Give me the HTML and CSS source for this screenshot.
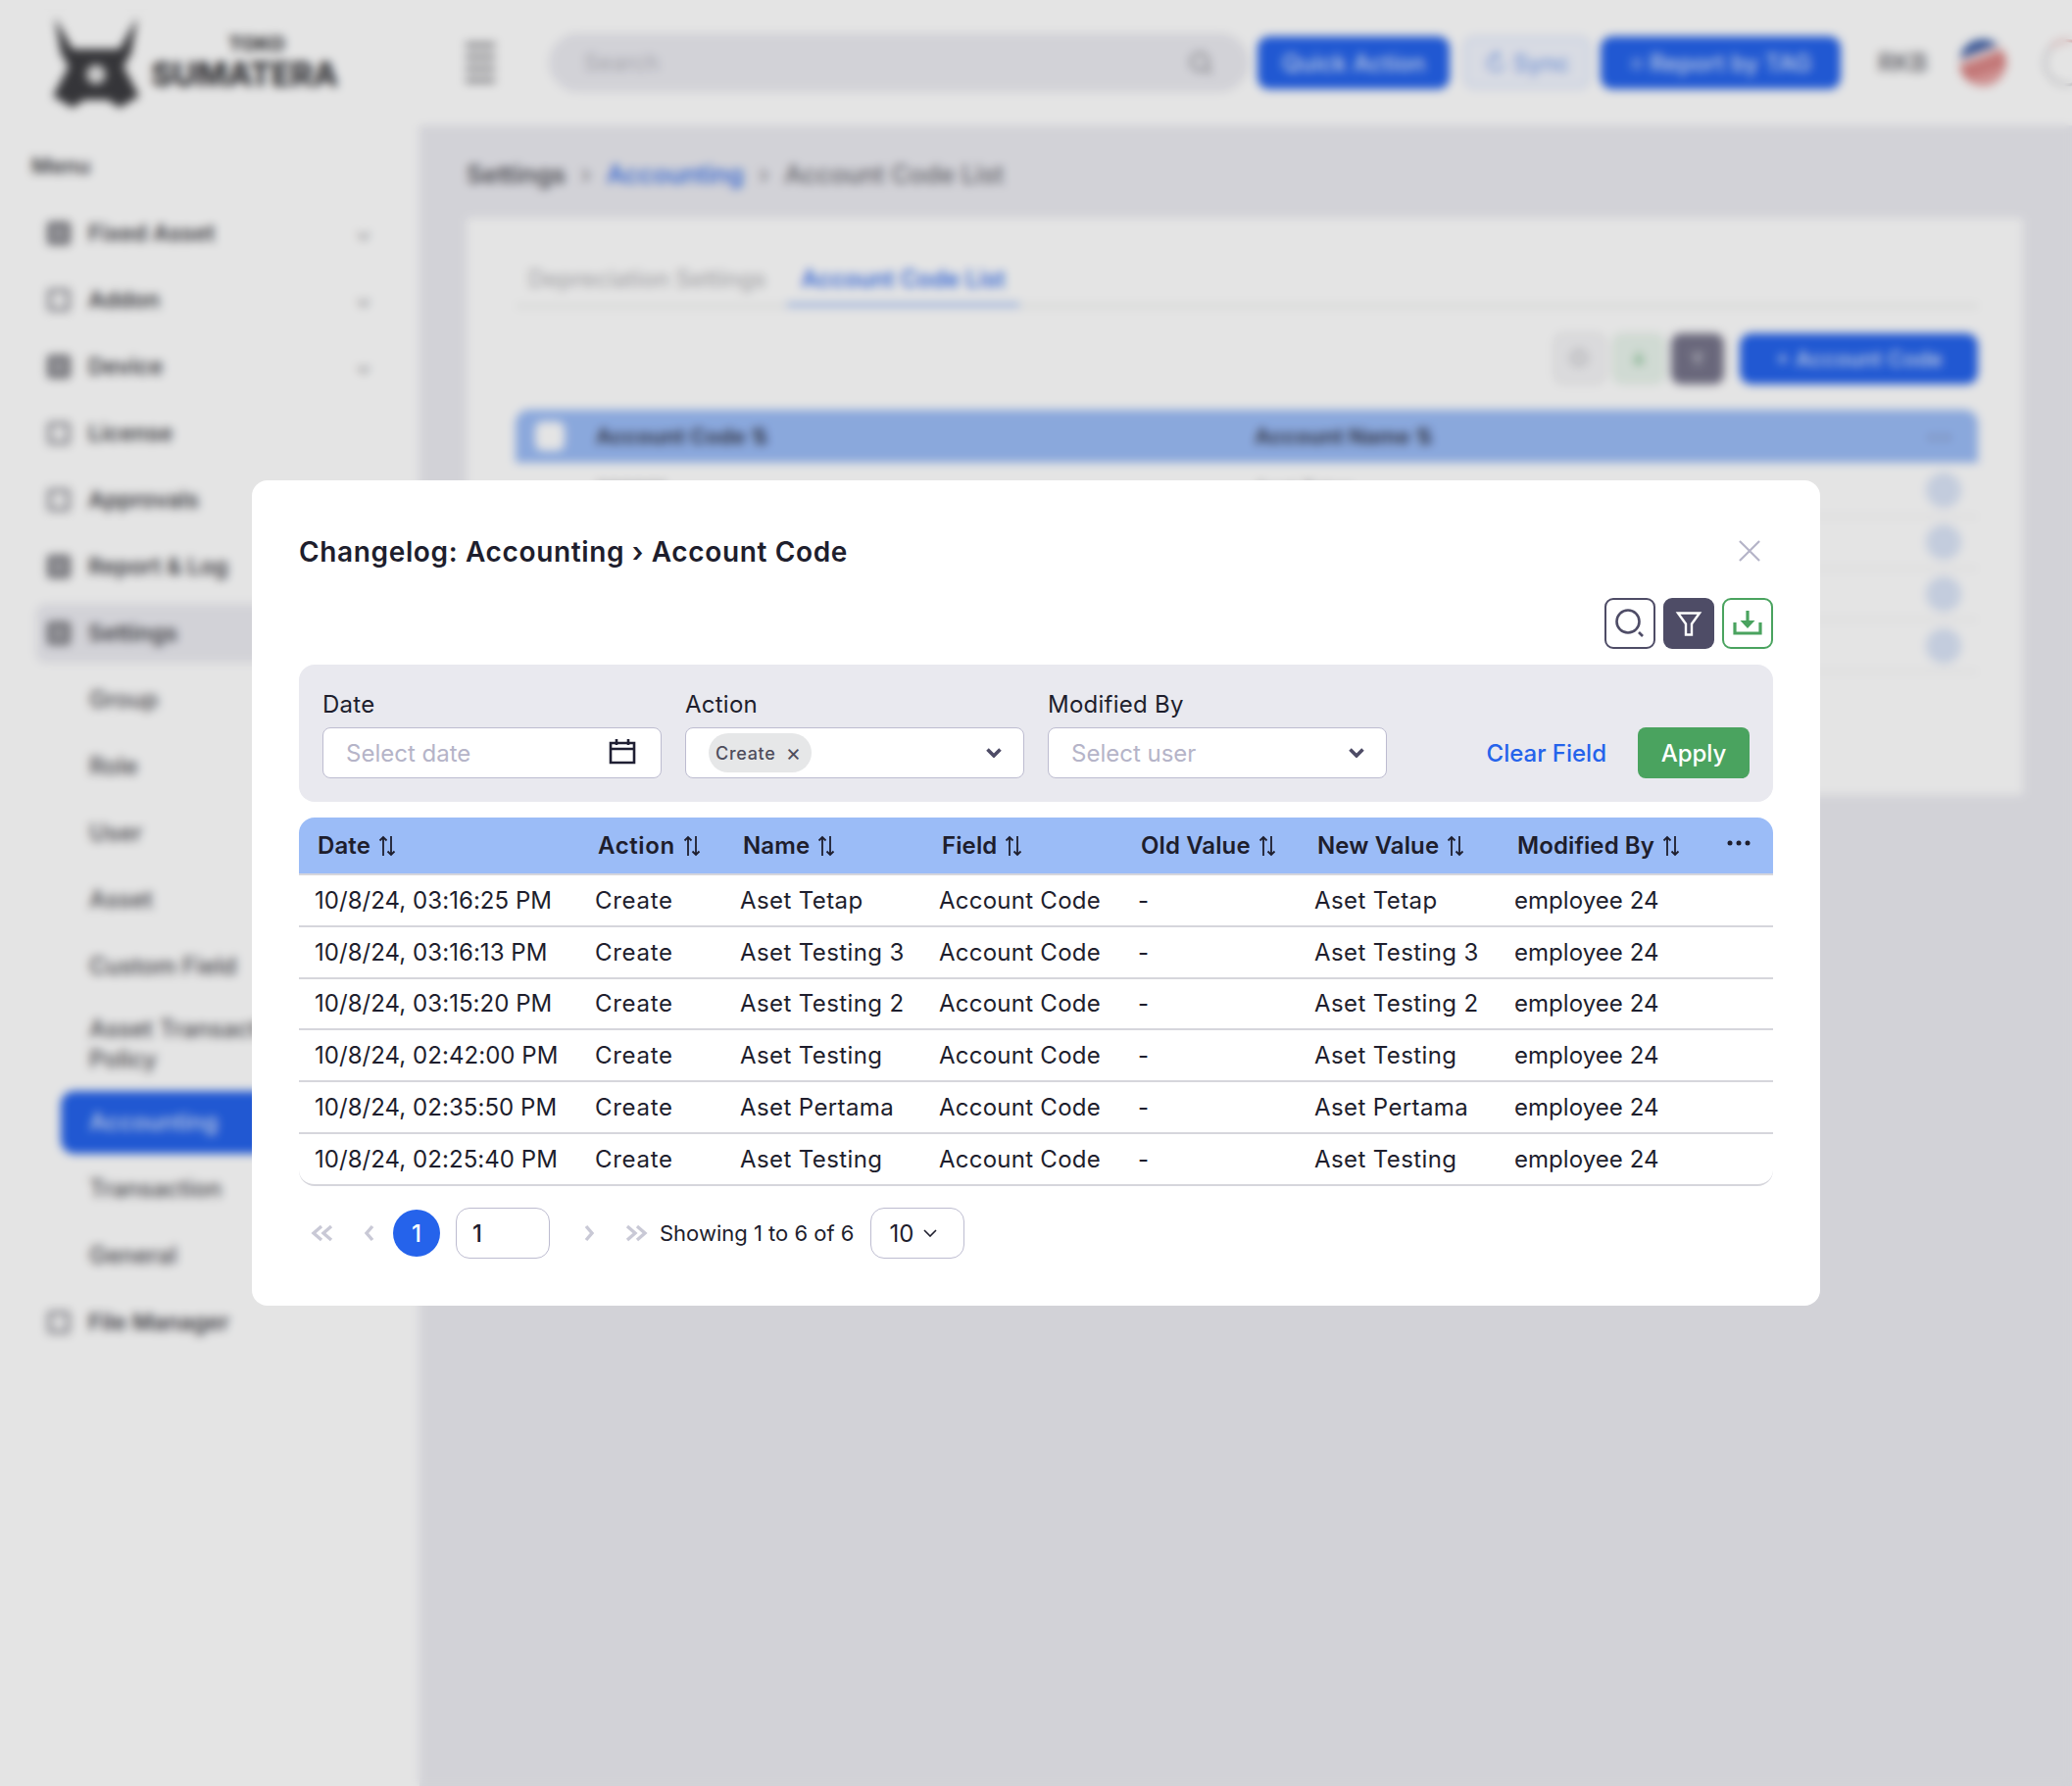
FILE: index.html
```html
<!DOCTYPE html>
<html lang="en">
<head>
<meta charset="utf-8">
<title>Changelog: Accounting › Account Code</title>
<link rel="stylesheet" href="styles.css">
</head>
<body>
<div class="app">
  <header class="topbar">
    <div class="logo">
      <svg class="logo-mark" viewBox="0 0 96 92"><path d="M6 0l18 32h48L90 0l-6 36-8 14 16 30-20 12-12-8H36l-12 8L4 80l16-30-8-14z" fill="#3c3c40"/><circle cx="48" cy="58" r="10" fill="#e4e4e4"/></svg>
      <div class="logo-text"><span class="logo-top">TOKO</span><span class="logo-bottom">SUMATERA</span></div>
    </div>
    <svg class="menu-toggle" viewBox="0 0 34 44"><path d="M2 4h30M2 16h30M2 28h30M2 40h30" stroke="#8b8b90" stroke-width="5" fill="none"/></svg>
    <div class="search"><span>Search</span><svg viewBox="0 0 24 24"><circle cx="11" cy="11" r="8" fill="none" stroke="#a0a0a6" stroke-width="3"/><path d="M17 17l5 5" stroke="#a0a0a6" stroke-width="3"/></svg></div>
    <button class="btn btn-primary btn-quick">Quick Action</button>
    <button class="btn btn-light">↻ Sync</button>
    <button class="btn btn-primary btn-report">⌗ Report by TAG</button>
    <span class="user-code">RKB</span>
    <span class="flag"></span>
    <span class="bell"></span>
  </header>
  <div class="workspace">
    <aside class="sidebar">
      <div class="menu-label">Menu</div>
      <div class="nav-item"><i class="nav-icon"></i><span>Fixed Asset</span><b class="caret">⌄</b></div>
      <div class="nav-item"><i class="nav-icon nav-icon-light"></i><span>Addon</span><b class="caret">⌄</b></div>
      <div class="nav-item"><i class="nav-icon"></i><span>Device</span><b class="caret">⌄</b></div>
      <div class="nav-item"><i class="nav-icon nav-icon-light"></i><span>License</span></div>
      <div class="nav-item"><i class="nav-icon nav-icon-light"></i><span>Approvals</span></div>
      <div class="nav-item"><i class="nav-icon"></i><span>Report &amp; Log</span></div>
      <div class="nav-item nav-open"><i class="nav-icon"></i><span>Settings</span></div>
      <div class="nav-sub">Group</div>
      <div class="nav-sub">Role</div>
      <div class="nav-sub">User</div>
      <div class="nav-sub">Asset</div>
      <div class="nav-sub">Custom Field</div>
      <div class="nav-sub nav-sub-tall"><span>Asset Transaction<br>Policy</span></div>
      <div class="nav-sub nav-active"><span>Accounting</span></div>
      <div class="nav-sub">Transaction</div>
      <div class="nav-sub">General</div>
      <div class="nav-item"><i class="nav-icon nav-icon-light"></i><span>File Manager</span></div>
    </aside>
    <main class="main">
      <nav class="crumbs"><b>Settings</b><span>›</span><a>Accounting</a><span>›</span><em>Account Code List</em></nav>
      <section class="card">
        <div class="tabs"><span class="tab">Depreciation Settings</span><span class="tab tab-on">Account Code List</span></div>
        <div class="card-tools">
          <span class="tool tool-grey"><svg viewBox="0 0 24 24"><circle cx="11" cy="11" r="7" fill="none" stroke="#b4b4ba" stroke-width="2.500"/></svg></span>
          <span class="tool tool-green"><svg viewBox="0 0 24 24"><path d="M12 5v10M7 12l5 5 5-5" fill="none" stroke="#8cc49a" stroke-width="3"/></svg></span>
          <span class="tool tool-dark"><svg viewBox="0 0 24 24"><path d="M5 6h14l-5 7v6h-4v-6z" fill="#b4b4c0"/></svg></span>
          <button class="btn btn-primary btn-add">+ Account Code</button>
        </div>
        <div class="bg-thead"><i class="bg-check"></i><b class="bg-col1">Account Code ⇅</b><b class="bg-col2">Account Name ⇅</b><b class="bg-dots">⋯</b></div>
        <div class="bg-row"><span class="bg-col1">000001</span><span>Aset Tetap</span><i></i></div>
        <div class="bg-row"><span class="bg-col1">000002</span><span>Aset Testing</span><i></i></div>
        <div class="bg-row"><span class="bg-col1">000003</span><span>Aset Testing</span><i></i></div>
        <div class="bg-row"><span class="bg-col1">000004</span><span>Aset Testing</span><i></i></div>
      </section>
    </main>
  </div>
</div>

<div class="overlay">
  <div class="modal">
    <div class="modal-head">
      <h2>Changelog: Accounting › Account Code</h2>
      <svg class="close" viewBox="0 0 24 24"><path d="M1 1l22 22M23 1L1 23" stroke="#b5b4c8" stroke-width="2.400" fill="none"/></svg>
    </div>
    <div class="actions">
      <button class="icon-btn icon-outline"><svg viewBox="0 0 52 52"><circle cx="24" cy="24" r="11.500" fill="none" stroke="#4e4c66" stroke-width="2.600"/><path d="M35 35l4 4" stroke="#4e4c66" stroke-width="2.600"/></svg></button>
      <button class="icon-btn icon-solid"><svg viewBox="0 0 52 52"><path d="M15 15.500h22l-8 11v11h-6v-11z" fill="none" stroke="#fff" stroke-width="2.400"/></svg></button>
      <button class="icon-btn icon-green"><svg viewBox="0 0 52 52"><path d="M13 25v11h26V25" fill="none" stroke="#4aa35f" stroke-width="3.200"/><path d="M26 13v11" stroke="#4aa35f" stroke-width="3.200"/><path d="M18.500 23h15L26 31z" fill="#4aa35f"/></svg></button>
    </div>
    <form class="filters">
      <div class="field">
        <label>Date</label>
        <div class="input"><span class="placeholder">Select date</span><svg class="cal" viewBox="0 0 28 28"><path d="M2 6h24v20H2zM2 12h24M8 2v6M20 2v6" fill="none" stroke="#1f1f33" stroke-width="2.600"/></svg></div>
      </div>
      <div class="field">
        <label>Action</label>
        <div class="input input-tags"><span class="pill">Create<span class="pill-x">×</span></span><svg class="chev" viewBox="0 0 16 10"><path d="M1.500 1.500L8 8l6.500-6.500" fill="none" stroke="#4e4c66" stroke-width="3.600"/></svg></div>
      </div>
      <div class="field">
        <label>Modified By</label>
        <div class="input"><span class="placeholder">Select user</span><svg class="chev" viewBox="0 0 16 10"><path d="M1.500 1.500L8 8l6.500-6.500" fill="none" stroke="#4e4c66" stroke-width="3.600"/></svg></div>
      </div>
      <div class="filter-actions">
        <a class="clear">Clear Field</a>
        <button type="button" class="apply">Apply</button>
      </div>
    </form>
    <table class="log">
      <colgroup><col class="c-date"><col class="c-action"><col class="c-name"><col class="c-field"><col class="c-old"><col class="c-new"><col class="c-mod"><col class="c-more"></colgroup>
      <thead>
        <tr>
          <th>Date<svg class="sort" viewBox="0 0 18 22"><path d="M5 21V2M1.500 5.500L5 2l3.500 3.500M13 1v19M9.500 16.500L13 20l3.500-3.500" fill="none" stroke="#1e1e2d" stroke-width="1.800"/></svg></th>
          <th>Action<svg class="sort" viewBox="0 0 18 22"><path d="M5 21V2M1.500 5.500L5 2l3.500 3.500M13 1v19M9.500 16.500L13 20l3.500-3.500" fill="none" stroke="#1e1e2d" stroke-width="1.800"/></svg></th>
          <th>Name<svg class="sort" viewBox="0 0 18 22"><path d="M5 21V2M1.500 5.500L5 2l3.500 3.500M13 1v19M9.500 16.500L13 20l3.500-3.500" fill="none" stroke="#1e1e2d" stroke-width="1.800"/></svg></th>
          <th>Field<svg class="sort" viewBox="0 0 18 22"><path d="M5 21V2M1.500 5.500L5 2l3.500 3.500M13 1v19M9.500 16.500L13 20l3.500-3.500" fill="none" stroke="#1e1e2d" stroke-width="1.800"/></svg></th>
          <th>Old Value<svg class="sort" viewBox="0 0 18 22"><path d="M5 21V2M1.500 5.500L5 2l3.500 3.500M13 1v19M9.500 16.500L13 20l3.500-3.500" fill="none" stroke="#1e1e2d" stroke-width="1.800"/></svg></th>
          <th>New Value<svg class="sort" viewBox="0 0 18 22"><path d="M5 21V2M1.500 5.500L5 2l3.500 3.500M13 1v19M9.500 16.500L13 20l3.500-3.500" fill="none" stroke="#1e1e2d" stroke-width="1.800"/></svg></th>
          <th>Modified By<svg class="sort" viewBox="0 0 18 22"><path d="M5 21V2M1.500 5.500L5 2l3.500 3.500M13 1v19M9.500 16.500L13 20l3.500-3.500" fill="none" stroke="#1e1e2d" stroke-width="1.800"/></svg></th>
          <th class="more"><svg viewBox="0 0 24 6"><circle cx="3" cy="3" r="2.500"/><circle cx="12" cy="3" r="2.500"/><circle cx="21" cy="3" r="2.500"/></svg></th>
        </tr>
      </thead>
      <tbody>
        <tr><td>10/8/24, 03:16:25 PM</td><td>Create</td><td>Aset Tetap</td><td>Account Code</td><td>-</td><td>Aset Tetap</td><td>employee 24</td><td></td></tr>
        <tr><td>10/8/24, 03:16:13 PM</td><td>Create</td><td>Aset Testing 3</td><td>Account Code</td><td>-</td><td>Aset Testing 3</td><td>employee 24</td><td></td></tr>
        <tr><td>10/8/24, 03:15:20 PM</td><td>Create</td><td>Aset Testing 2</td><td>Account Code</td><td>-</td><td>Aset Testing 2</td><td>employee 24</td><td></td></tr>
        <tr><td>10/8/24, 02:42:00 PM</td><td>Create</td><td>Aset Testing</td><td>Account Code</td><td>-</td><td>Aset Testing</td><td>employee 24</td><td></td></tr>
        <tr><td>10/8/24, 02:35:50 PM</td><td>Create</td><td>Aset Pertama</td><td>Account Code</td><td>-</td><td>Aset Pertama</td><td>employee 24</td><td></td></tr>
        <tr><td>10/8/24, 02:25:40 PM</td><td>Create</td><td>Aset Testing</td><td>Account Code</td><td>-</td><td>Aset Testing</td><td>employee 24</td><td></td></tr>
      </tbody>
    </table>
    <div class="pager">
      <button class="pg"><svg viewBox="0 0 24 18"><path d="M11 2L3 9l8 7M21 2l-8 7 8 7" fill="none" stroke="#c9c9d6" stroke-width="3.400"/></svg></button>
      <button class="pg"><svg viewBox="0 0 24 18"><path d="M15 2L9 9l6 7" fill="none" stroke="#c9c9d6" stroke-width="3.400"/></svg></button>
      <span class="pg-current">1</span>
      <div class="pg-input">1</div>
      <button class="pg pg-next"><svg viewBox="0 0 24 18"><path d="M9 2l6 7-6 7" fill="none" stroke="#c9c9d6" stroke-width="3.400"/></svg></button>
      <button class="pg"><svg viewBox="0 0 24 18"><path d="M3 2l8 7-8 7M13 2l8 7-8 7" fill="none" stroke="#c9c9d6" stroke-width="3.400"/></svg></button>
      <span class="pg-info">Showing 1 to 6 of 6</span>
      <div class="pg-size">10<svg viewBox="0 0 14 8"><path d="M1 1l6 6 6-6" fill="none" stroke="#1e1e2d" stroke-width="1.600"/></svg></div>
    </div>
  </div>
</div>
</body>
</html>
```

FILE: styles.css
```css
* { box-sizing: border-box; }
html, body { margin: 0; height: 100%; }
body { font-family: Inter, "Noto Sans", sans-serif; color: #1e1e2d; background: #fff; overflow: hidden; }
button { font-family: inherit; border: 0; padding: 0; }

/* Underlying application, seen through the blurred backdrop */
.app { height: 1822px; display: flex; flex-direction: column; overflow: hidden; }
.topbar { height: 128px; flex: none; display: flex; align-items: center; padding-left: 50px; background: #fff; white-space: nowrap; }
.logo { width: 423px; flex: none; height: 92px; display: flex; align-items: center; gap: 8px; }
.logo-mark { width: 96px; height: 92px; flex: none; }
.logo-text { display: flex; flex-direction: column; align-items: flex-end; font-weight: 800; color: #3c3c40; }
.logo-top { font-size: 20px; line-height: 24px; margin-right: 54px; }
.logo-bottom { font-size: 34px; line-height: 38px; letter-spacing: -0.500px; }
.menu-toggle { width: 34px; height: 44px; flex: none; }
.search { width: 714px; height: 60px; margin-left: 53px; flex: none; border-radius: 30px; background: #ebebf1; display: flex; align-items: center; justify-content: space-between; padding: 0 36px; color: #b5b5bd; font-size: 23px; }
.search svg { width: 26px; height: 26px; }
.btn { height: 54px; border-radius: 12px; font-size: 24px; font-weight: 500; flex: none; }
.btn-primary { background: #2563eb; color: #dbe6ff; }
.btn-quick { width: 196px; margin-left: 9px; }
.btn-light { width: 130px; margin-left: 14px; background: #f2f5fe; border: 3px solid #dfe8fb; color: #7ea3ee; }
.btn-report { width: 245px; margin-left: 10px; }
.user-code { margin-left: 38px; width: 66px; font-size: 25px; font-weight: 600; color: #75757c; }
.flag { width: 48px; height: 48px; border-radius: 50%; margin-left: 33px; flex: none; background: linear-gradient(160deg, #3c5fa8 0 30%, #f1dada 30% 42%, #db8686 42% 68%, #e7a3a3 68%); }
.bell { width: 48px; height: 48px; border-radius: 50%; margin-left: 38px; flex: none; border: 3px solid #cfcfd4; border-top-color: #e6b7b7; background: #fff; }

.workspace { flex: 1; display: flex; min-height: 0; }
.sidebar { width: 428px; flex: none; background: #fff; font-size: 23px; font-weight: 600; color: #44444a; padding-right: 28px; }
.menu-label { height: 76px; padding: 28px 0 0 32px; font-size: 22px; font-weight: 600; color: #44444a; }
.nav-item { height: 68px; display: flex; align-items: center; padding-left: 48px; }
.nav-item span { margin-left: 18px; flex: 1; }
.nav-icon { width: 24px; height: 24px; border: 5px solid #77777d; background: #a9a9af; border-radius: 4px; flex: none; }
.nav-icon-light { border-color: #a4a4aa; background: none; }
.caret { width: 37px; color: #88888e; font-weight: 600; font-size: 20px; }
.nav-open { background: #ebebf1; border-radius: 10px; margin-left: 37px; padding-left: 11px; height: 60px; margin-block: 4px; }
.nav-sub { height: 67.800px; display: flex; align-items: center; padding-left: 91px; color: #4c4c52; font-size: 24px; font-weight: 500; }
.nav-sub-tall { height: 92px; line-height: 31px; }
.nav-active { background: #2563eb; color: #dbe6ff; margin-left: 62px; padding-left: 29px; border-radius: 14px; height: 64px; margin-block: 2px; }

.main { flex: 1; min-width: 0; background: #ebebf1; padding: 0 50px 0 48px; }
.crumbs { height: 94px; display: flex; align-items: center; gap: 16px; font-size: 25.500px; padding-top: 4px; color: #6e6e75; white-space: nowrap; }
.crumbs b { font-weight: 600; color: #55555c; }
.crumbs a { color: #2f6ae6; font-weight: 500; }
.crumbs em { font-style: normal; font-weight: 500; }
.card { height: 589px; background: #fff; padding: 34px 46px 0 50px; }
.tabs { height: 57px; display: flex; border-bottom: 2px solid #e3e6e3; font-size: 23.700px; color: #b9b9bd; font-weight: 500; white-space: nowrap; }
.tab { padding: 14px 13px 0; }
.tab-on { color: #2563eb; padding: 14px 15px 0; border-bottom: 4px solid #9dbaf3; height: 57px; margin-left: 8px; }
.card-tools { display: flex; justify-content: flex-end; align-items: center; gap: 6px; margin-top: 27px; height: 52px; }
.tool { width: 54px; height: 52px; border-radius: 10px; background: #f4f4f6; border: 2px solid #e8e8ea; display: flex; align-items: center; justify-content: center; }
.tool svg { width: 24px; height: 24px; }
.tool-green { background: #e9f4ec; border-color: #e3f0e6; }
.tool-dark { background: #76748a; border: 0; }
.btn-add { width: 243px; height: 52px; margin-left: 10px; font-size: 22px; }
.bg-thead { height: 54px; margin-top: 26px; margin-bottom: 3px; background: #9bbcf7; border-radius: 14px 14px 0 0; display: flex; align-items: center; font-size: 22px; color: #3d4358; white-space: nowrap; padding-left: 20px; }
.bg-check { width: 30px; height: 30px; border-radius: 8px; background: #fff; margin-right: 32px; flex: none; }
.bg-col1 { width: 672px; flex: none; }
.bg-col2 { flex: 1; }
.bg-dots { width: 52px; color: #77809a; font-size: 26px; }
.bg-row { height: 52.800px; display: flex; align-items: center; border-bottom: 2px solid #f0f0f2; padding-left: 82px; font-size: 20px; color: #77777c; }
.bg-row span:nth-child(2) { flex: 1; }
.bg-row i { width: 36px; height: 36px; border-radius: 50%; background: #dbe5f8; margin-right: 17px; }

/* Modal layer */
.overlay { position: fixed; inset: 0; display: flex; align-items: center; justify-content: center; background: rgba(0, 0, 0, 0.106); -webkit-backdrop-filter: blur(5px); backdrop-filter: blur(5px); }
.modal { width: 1600px; height: 842px; background: #fff; border-radius: 16px; padding: 48px; display: flex; flex-direction: column; }
.modal-head { height: 50px; display: flex; align-items: center; justify-content: space-between; padding-right: 13px; flex: none; }
.modal-head h2 { margin: 0; font-size: 28px; line-height: 50px; font-weight: 600; letter-spacing: 0.640px; color: #1e1e2d; white-space: nowrap; }
.close { width: 22px; height: 22px; margin-top: -2px; }
.actions { display: flex; justify-content: flex-end; gap: 8px; margin-top: 22px; flex: none; }
.icon-btn { width: 52px; height: 52px; border-radius: 9px; display: block; background: #fff; }
.icon-btn svg { width: 52px; height: 52px; display: block; margin: -2px; }
.icon-outline { border: 2px solid #4e4c66; }
.icon-solid { background: #4e4c66; }
.icon-solid svg { margin: 0; }
.icon-green { border: 2px solid #4aa35f; }

.filters { margin-top: 16px; height: 140px; flex: none; background: #e9e9ef; border-radius: 16px; padding: 24px; display: flex; gap: 24px; align-items: flex-end; }
.field { width: 346px; flex: none; }
.field label { display: block; height: 40px; line-height: 34px; font-size: 24px; font-weight: 400; letter-spacing: 0.250px; color: #1e1e2d; }
.input { height: 52px; background: #fff; border: 1.500px solid #bdbcd0; border-radius: 8px; display: flex; align-items: center; justify-content: space-between; padding: 0 22px 0 23px; font-size: 24px; }
.placeholder { color: #b5b4c8; }
.cal { width: 28px; height: 28px; margin: 0 3px 4px 0; }
.chev { width: 16px; height: 10px; }
.pill { height: 40px; border-radius: 20px; background: #e6e7e8; display: inline-flex; align-items: center; padding: 0 10px 0 7px; font-size: 18px; font-weight: 500; letter-spacing: 0.700px; color: #4e4d5c; }
.pill-x { font-size: 24px; font-weight: 400; margin-left: 10px; line-height: 1; }
.filter-actions { flex: 1; height: 52px; display: flex; justify-content: flex-end; align-items: center; gap: 32px; }
.clear { color: #2563eb; font-size: 24px; font-weight: 500; }
.apply { width: 114px; height: 52px; border-radius: 8px; background: #4aa35f; color: #fff; font-size: 24px; font-weight: 500; }

.log { margin-top: 16px; width: 1504px; flex: none; table-layout: fixed; border-collapse: separate; border-spacing: 0; font-size: 24px; }
.c-date { width: 286px; } .c-action { width: 148px; } .c-name { width: 203px; } .c-field { width: 203px; }
.c-old { width: 180px; } .c-new { width: 204px; } .c-mod { width: 211px; } .c-more { width: 69px; }
.log th { height: 59px; background: #9bbcf7; border-bottom: 2px solid #d6d6dc; text-align: left; padding: 0 0 0 19px; font-weight: 600; letter-spacing: 0.100px; white-space: nowrap; }
.log th:first-child { border-top-left-radius: 16px; }
.log th:last-child { border-top-right-radius: 16px; }
.log th:nth-child(2) { letter-spacing: 0.600px; }
.sort { width: 18px; height: 22px; margin-left: 8px; vertical-align: -3px; }
.log th.more { padding: 0 0 6px 22px; }
.more svg { width: 24px; height: 6px; display: block; fill: #1e1e2d; }
.log td { height: 52.800px; border-bottom: 2px solid #d6d6dc; padding: 0 0 0 16px; white-space: nowrap; color: #1e1e2d; letter-spacing: 0.050px; }
.log td:nth-child(2) { letter-spacing: 0.700px; }
.log td:nth-child(3), .log td:nth-child(6) { letter-spacing: 0.400px; }
.log td:nth-child(4) { letter-spacing: 0.250px; }
.log tr:last-child td:first-child { border-bottom-left-radius: 16px; }
.log tr:last-child td:last-child { border-bottom-right-radius: 16px; }

.pager { margin-top: auto; height: 52px; display: flex; align-items: center; flex: none; font-size: 24px; }
.pg { width: 48px; height: 48px; background: none; display: flex; align-items: center; justify-content: center; flex: none; }
.pg svg { width: 24px; height: 18px; }
.pg-current { width: 48px; height: 48px; border-radius: 50%; background: #2563eb; color: #fff; font-weight: 500; display: flex; align-items: center; justify-content: center; flex: none; }
.pg-input { width: 96px; height: 52px; margin-left: 16px; border: 1.500px solid #bdbcd0; border-radius: 14px; display: flex; align-items: center; padding-left: 16px; font-weight: 500; flex: none; }
.pg-next { margin-left: 16px; }
.pg-info { white-space: nowrap; flex: none; font-size: 22px; }
.pg-size { width: 96px; height: 52px; margin-left: 17px; border: 1.500px solid #bdbcd0; border-radius: 14px; display: flex; align-items: center; padding-left: 18px; gap: 10px; flex: none; }
.pg-size svg { width: 14px; height: 8px; }
```
